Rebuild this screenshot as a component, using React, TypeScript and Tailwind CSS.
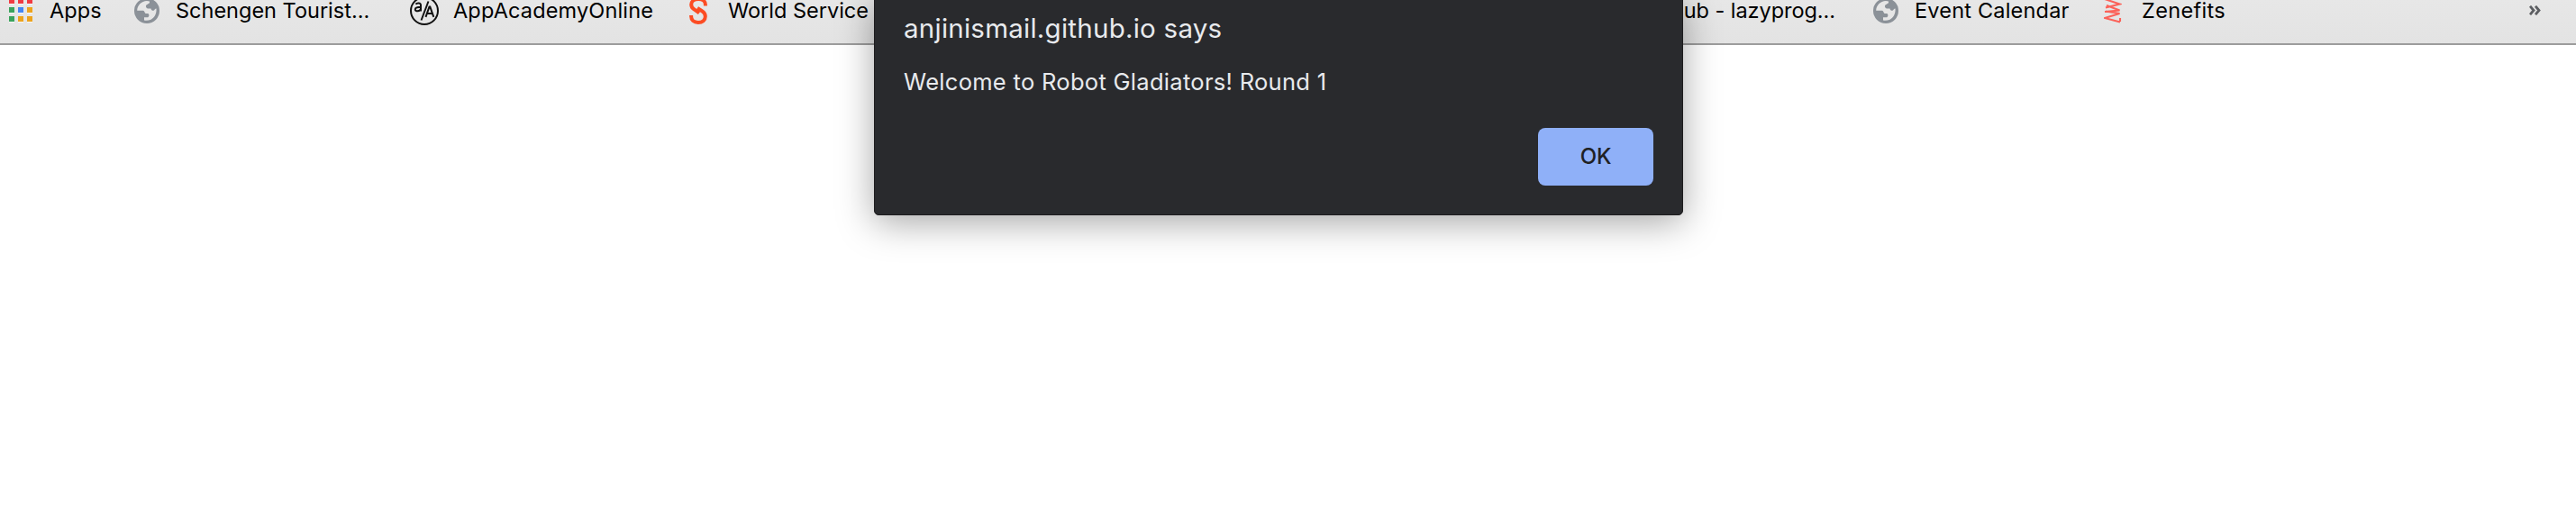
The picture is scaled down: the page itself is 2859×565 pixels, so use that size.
import type { ReactNode } from 'react';

const appColors = ['#f03a42', '#f03a42', '#f03a42', '#3aa25c', '#4285f4', '#eda31c', '#3aa25c', '#eda31c', '#eda31c'];

function AppsIcon() {
  return (
    <svg width="26" height="28" viewBox="0 0 26 28">
      {appColors.map((c, i) => (
        <g key={i}>
          <rect x={(i % 3) * 10} y={Math.floor(i / 3) * 10 + 1} width="6" height="6" fill="#f8f8f8" />
          <rect x={(i % 3) * 10} y={Math.floor(i / 3) * 10} width="6" height="6" fill={c} />
        </g>
      ))}
    </svg>
  );
}

function GlobeIcon() {
  return (
    <svg width="28" height="28" viewBox="0 0 28 28">
      <circle cx="14" cy="14" r="14" fill="#8b9198" />
      <path d="M3.200 13.800C3.200 8 8 3.200 14 3l3 .5v1.800l-3.800 2.500c-.8 1.500.2 3.400 1.800 3.700h3.500c.3 1.800 1.500 2.500 3 2.300 1-.2 1.300-2.300 3-2.300.6 5.500-2.200 10.300-6 12.200-2.500 1-5 1.200-7.500.8v-3.300h4.200c1.600-1.400 1.600-3 .2-4.300H12.500c-1.300-1-1-2.600-2.500-3.100z" fill="#e6e6e6" />
    </svg>
  );
}

function AcademyIcon() {
  return (
    <svg width="32" height="32" viewBox="0 0 32 32" fill="none" stroke="#111" strokeWidth="2">
      <circle cx="16" cy="16" r="15" />
      <path d="M20.500 5.500 12.500 26.500" />
      <path d="M6.500 8.800c1-2 5.500-2 5.500.8v7M12 11.800c-3 0-6.200.2-6.200 2.600 0 3 5.400 2.300 6.200-.6" />
      <path d="M17.500 22.800 21.500 11.500h.8l4 11.300M19 19h6.200" />
    </svg>
  );
}

function ServiceIcon() {
  return (
    <svg width="20" height="32" viewBox="0 0 20 32" fill="none" stroke="#fc4c23" strokeWidth="4">
      <path d="M17.900 10.500V9c0-3.500-3-6-7.700-6C5.500 3 2.200 5.500 2.200 9c0 2.800 1.300 4.300 3.300 5.500l5.500 4" />
      <path d="M2.100 21v1c0 4 3 6.900 7.700 6.900 4.900 0 8-2.500 8-6.700 0-2.800-1.300-4.500-3.300-5.700L9 12.800" />
    </svg>
  );
}

function ZenefitsIcon() {
  return (
    <svg width="20" height="28" viewBox="0 0 20 28" fill="none" stroke="#fb6259" strokeWidth="2.100">
      <path d="M1 1 17.500 6.500 2 10.500M3 8 17.500 13.500 1 15M2 14.500 17.500 17 1 22l17 4.500M18 22v4" />
    </svg>
  );
}

function Bookmark({ icon, gap, width, label }: { icon: ReactNode; gap: string; width: string; label: ReactNode }) {
  return (
    <div className={`-mt-1 flex h-8 shrink-0 items-center ${gap} ${width}`}>
      <span className="shrink-0">{icon}</span>
      {label}
    </div>
  );
}

export default function App() {
  return (
    <div className="relative h-[565px] w-full overflow-hidden bg-white font-['Inter',sans-serif]">
      <div className="flex h-[50px] items-start border-b-2 border-[#9c9c9c] bg-linear-to-b from-[#e7e7e7] to-[#e3e3e3] pl-[10px] text-[23.5px] leading-6 whitespace-nowrap text-black">
        <Bookmark icon={<AppsIcon />} gap="gap-[19px]" width="w-[139px]" label={<span className="tracking-[0.1px]">Apps</span>} />
        <Bookmark icon={<GlobeIcon />} gap="gap-[18px]" width="w-[306px]" label={<span className="leading-6">Schengen Tourist...</span>} />
        <Bookmark icon={<AcademyIcon />} gap="gap-4" width="w-[310px]" label={<span className="tracking-[0.15px]">AppAcademyOnline</span>} />
        <Bookmark icon={<ServiceIcon />} gap="gap-[23px]" width="w-[1035px]" label={<span className="leading-6">World Service</span>} />
        <div className="flex w-[237px] shrink-0 justify-end tracking-[-0.05px]">GitHub - lazyprog...</div>
        <div className="w-[42px] shrink-0" />
        <Bookmark icon={<GlobeIcon />} gap="gap-[18px]" width="w-[256px]" label={<span className="tracking-[0.2px]">Event Calendar</span>} />
        <Bookmark icon={<ZenefitsIcon />} gap="gap-[22px]" width="w-[471px]" label={<span className="tracking-[0.35px]">Zenefits</span>} />
        <svg className="mt-[6px] ml-px shrink-0" width="13" height="11" viewBox="0 0 13 11" fill="none" stroke="#5c5e62" strokeWidth="2.800">
          <path d="M1 .8l4 4.700-4 4.700M7 .8l4 4.700-4 4.700" />
        </svg>
      </div>
      <div role="dialog" className="absolute top-[-6px] left-[970px] flex h-[245px] w-[898px] flex-col rounded-[5px] border border-[#1d1c1e] bg-[#292a2d] px-8 pb-8 text-[#e8eaed] shadow-[0_8px_40px_rgba(0,0,0,0.35)]">
        <h1 className="mt-[18px] text-[29.5px] leading-9 tracking-[0.25px] whitespace-nowrap"><span>anjinismail.github.io says</span></h1>
        <p className="mt-[26px] text-[25.500px] leading-8 tracking-[0.3px] whitespace-nowrap"><span>Welcome to Robot Gladiators! Round 1</span></p>
        <button className="mt-auto flex h-16 w-32 items-center justify-center self-end rounded-lg bg-[#8fb0f8] text-[24px] font-medium tracking-[-0.3px] text-[#202124]">OK</button>
      </div>
    </div>
  );
}
